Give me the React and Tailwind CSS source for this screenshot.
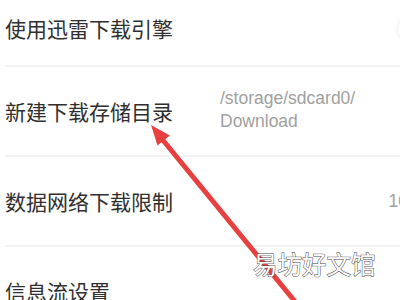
import React from 'react';

const rows = [
  { label: '使用迅雷下载引擎', kind: 'toggle' },
  { label: '新建下载存储目录', kind: 'path' },
  { label: '数据网络下载限制', kind: 'limit' },
  { label: '信息流设置', kind: 'none' },
];

function Row({ label, kind, first }) {
  return (
    <div
      className={`flex items-center justify-between ml-[5px] ${
        first ? 'h-[65px] pb-[8px]' : 'h-[90px] border-t-2 border-[#f2f2f2]'
      }`}
    >
      <span className="text-[21px] text-[#2f2f2f] leading-none">{label}</span>
      {kind === 'path' && (
        <div className="w-[180px] text-[17.5px] leading-[23px] text-[#a0a0a0] font-['Liberation_Sans',sans-serif] pb-[2px]">
          <div>/storage/sdcard0/</div>
          <div>Download</div>
        </div>
      )}
      {kind === 'limit' && (
        <span className="text-[17.5px] text-[#a0a0a0] font-['Liberation_Sans',sans-serif] mr-[-8px]">10</span>
      )}
      {kind === 'toggle' && (
        <div className="w-[24px] h-[24px] rounded-full mr-[-22px] shadow-[0_0_4px_rgba(0,0,0,0.12)] bg-white" />
      )}
    </div>
  );
}

export default function App() {
  return (
    <div className="relative w-[400px] h-[300px] overflow-hidden bg-white font-['Noto_Sans_CJK_SC',sans-serif]">
      <div className="flex flex-col">
        {rows.map((r, i) => (
          <Row key={r.label} {...r} first={i === 0} />
        ))}
      </div>

      {/* red arrow */}
      <svg className="absolute left-0 top-0" width="400" height="300" viewBox="0 0 400 300">
        <line x1="162" y1="139" x2="297" y2="304" stroke="#e8403f" strokeWidth="5" />
        <polygon points="151,125 157.5,145.6 169.9,135.4" fill="#e8403f" />
      </svg>

      {/* watermark */}
      <div className="absolute left-[253px] top-[252px] text-[24.5px] leading-none text-white [-webkit-text-stroke:1px_#4a4a4a] [paint-order:stroke_fill]">
        易坊好文馆
      </div>
    </div>
  );
}
